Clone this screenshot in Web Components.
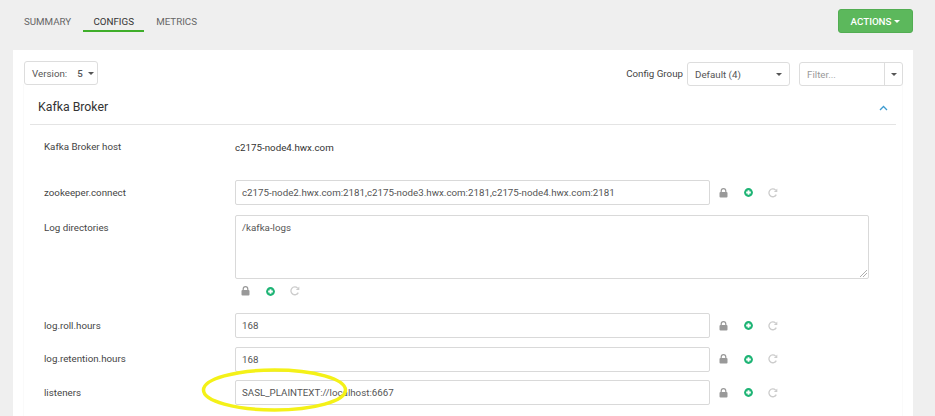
<!DOCTYPE html>
<html>
<head>
<meta charset="utf-8">
<style>
  html, body { margin: 0; padding: 0; height: 416px; overflow: hidden; background: #efefef; }
  body { font-family: Roboto, "Liberation Sans", sans-serif; color: #333; }
</style>
</head>
<body>
<svc-page>
  <svc-tabs slot="top">
    <svc-tab>SUMMARY</svc-tab>
    <svc-tab active>CONFIGS</svc-tab>
    <svc-tab>METRICS</svc-tab>
  </svc-tabs>
  <config-toolbar slot="toolbar"></config-toolbar>
  <config-section title="Kafka Broker" slot="section">
    <config-row label="Kafka Broker host" type="static" value="c2175-node4.hwx.com"></config-row>
    <config-row label="zookeeper.connect" value="c2175-node2.hwx.com:2181,c2175-node3.hwx.com:2181,c2175-node4.hwx.com:2181"></config-row>
    <config-row label="Log directories" type="area" value="/kafka-logs"></config-row>
    <config-row label="log.roll.hours" value="168"></config-row>
    <config-row label="log.retention.hours" value="168"></config-row>
    <config-row label="listeners" value="SASL_PLAINTEXT://localhost:6667"></config-row>
  </config-section>
</svc-page>

<script>
class SvcPage extends HTMLElement {
  constructor() {
    super();
    this.attachShadow({ mode: "open" }).innerHTML = `
    <style>
      :host { display: block; position: relative; height: 416px; overflow: hidden; }
      .top { display: flex; justify-content: space-between; height: 50px; padding: 9px 22px 0 12px; box-sizing: border-box; }
      .action {
        box-sizing: border-box; width: 75px; height: 24px; background: #5cb85c; border: 1px solid #52ad52; border-radius: 3px;
        color: #fff; font-size: 9.75px; font-weight: 500; display: flex; align-items: center; justify-content: center; gap: 3px;
      }
      .caret { width: 0; height: 0; border-left: 3px solid transparent; border-right: 3px solid transparent; border-top: 3px solid #fff; }
      .panel { background: #fff; margin: 0 22px 0 13px; padding: 11px 10px 0; height: 366px; box-sizing: border-box; }
      svg { position: absolute; left: 195px; top: 362px; }
    </style>
    <div class="top"><slot name="top"></slot><div class="action">ACTIONS<span class="caret"></span></div></div>
    <div class="panel"><slot name="toolbar"></slot><slot name="section"></slot></div>
    <svg width="160" height="56" viewBox="0 0 160 56"><ellipse cx="79.5" cy="28" rx="71" ry="20" fill="none" stroke="#f4f118" stroke-width="3.5"/></svg>`;
  }
}

class SvcTabs extends HTMLElement {
  constructor() {
    super();
    this.attachShadow({ mode: "open" }).innerHTML = `
    <style>:host { display: flex; height: 22px; }</style><slot></slot>`;
  }
}

class SvcTab extends HTMLElement {
  constructor() {
    super();
    this.attachShadow({ mode: "open" }).innerHTML = `
    <style>
      :host { display: block; box-sizing: border-box; height: 23px; padding: 7px 0 0; margin-left: 12px; font-size: 9.75px; color: #666; white-space: nowrap; }
      :host([active]) { width: 61px; text-align: center; color: #333; border-bottom: 2px solid #3fae2a; }
    </style><slot></slot>`;
  }
}

class ConfigToolbar extends HTMLElement {
  constructor() {
    super();
    this.attachShadow({ mode: "open" }).innerHTML = `
    <style>
      :host { display: flex; align-items: flex-start; height: 23px; font-size: 9.75px; color: #444; }
      .box { box-sizing: border-box; background: #fff; border: 1px solid #ddd; border-radius: 3px; display: flex; align-items: center; color: #555; }
      .version { width: 74px; height: 24px; margin-left: 1px; padding-left: 7px; }
      .version b { font-weight: 500; margin-left: 10px; margin-right: 5px; }
      .caret { width: 0; height: 0; border-left: 3px solid transparent; border-right: 3px solid transparent; border-top: 3px solid #555; }
      .spacer { flex: 1; }
      .lbl { margin-top: 7px; margin-right: 4px; }
      .group { width: 103px; height: 24px; margin-top: 1px; padding: 0 7px; justify-content: space-between; }
      .filter { width: 104px; height: 24px; margin-top: 1px; margin-left: 9px; }
      .filter span { flex: 1; padding-left: 7px; color: #999; }
      .filter i { box-sizing: border-box; width: 18px; height: 100%; border-left: 1px solid #ddd; display: flex; align-items: center; justify-content: center; }
    </style>
    <div class="box version">Version:<b>5</b><span class="caret"></span></div>
    <div class="spacer"></div>
    <div class="lbl">Config Group</div>
    <div class="box group">Default (4)<span class="caret"></span></div>
    <div class="box filter"><span>Filter...</span><i><span class="caret" style="flex:none;padding:0"></span></i></div>`;
  }
}

class ConfigSection extends HTMLElement {
  constructor() {
    super();
    this.attachShadow({ mode: "open" }).innerHTML = `
    <style>
      :host { display: block; box-sizing: border-box; border: 1px solid #fafafa; border-top: none; border-bottom: none; padding: 0 6px; height: 340px; }
      .head { display: flex; justify-content: space-between; align-items: center; height: 41px; padding: 0 8px 0 8px; border-bottom: 1px solid #e4e4e4; box-sizing: border-box; }
      h3 { margin: 0; font-size: 12.3px; font-weight: 400; color: #333; position: relative; top: 3px; }
      svg { display: block; position: relative; top: 4px; }
      .rows { padding: 0 0 0 14px; }
    </style>
    <div class="head"><h3></h3>
      <svg width="9" height="6" viewBox="0 0 9 6"><path d="M1 5 L4.5 1.5 L8 5" fill="none" stroke="#3d9bd0" stroke-width="1.3"/></svg>
    </div>
    <div class="rows"><slot></slot></div>`;
    this.shadowRoot.querySelector("h3").textContent = this.getAttribute("title");
  }
}

const rowIcons = `
  <svg width="9" height="10" viewBox="0 0 9 10"><path d="M2.2 4.5V3a2.3 2.3 0 0 1 4.6 0v1.5" fill="none" stroke="#999" stroke-width="1.2"/><rect x="0.5" y="4" width="8" height="5.5" rx="1" fill="#999"/></svg>
  <svg width="9" height="9" viewBox="0 0 10 10"><circle cx="5" cy="5" r="4.9" fill="#1eb475"/><path d="M5 2.4v5.2M2.4 5h5.2" stroke="#fff" stroke-width="2"/></svg>
  <svg width="10" height="10" viewBox="0 0 10 10"><path d="M8.3 6.6A3.9 3.9 0 1 1 7.6 2.1" fill="none" stroke="#ccc" stroke-width="1.3"/><path d="M9.3 0.6v3.4H5.9z" fill="#ccc"/></svg>`;

class ConfigRow extends HTMLElement {
  constructor() {
    super();
    const type = this.getAttribute("type") || "input";
    const label = this.getAttribute("label");
    const value = this.getAttribute("value");
    let body;
    if (type === "static") {
      body = `<div class="static">${value}</div>`;
    } else if (type === "area") {
      body = `<div class="col"><div class="field area">${value}<svg class="grip" width="7" height="7" viewBox="0 0 7 7"><path d="M0 7L7 0M3 7L7 3" stroke="#999" stroke-width=".8"/></svg></div><div class="icons under">${rowIcons}</div></div>`;
    } else {
      body = `<div class="field">${value}</div><div class="icons">${rowIcons}</div>`;
    }
    this.attachShadow({ mode: "open" }).innerHTML = `
    <style>
      :host { display: flex; font-size: 9.75px; color: #444; }
      :host([type="static"]) { height: 55px; padding-top: 16px; box-sizing: border-box; }
      :host(:not([type])) { height: 33.5px; }
      :host([type="area"]) { height: 98px; margin-top: 1.5px; }
      .lbl { width: 191px; flex: none; padding-top: 6.5px; }
      :host([type="static"]) .lbl { padding-top: 0; }
      :host([type="static"]) .static { padding-top: 1px; color: #333; }
      .field { position: relative; box-sizing: border-box; width: 475px; height: 25px; border: 1px solid #d9d9d9; border-radius: 2px; padding: 0 6px; display: flex; align-items: center; color: #555; white-space: nowrap; }
      .area { width: 634px; height: 64px; align-items: flex-start; padding-top: 6px; }
      .grip { position: absolute; right: 1px; bottom: 1px; }
      .icons { display: flex; align-items: center; gap: 15.5px; margin-left: 9px; height: 25px; }
      .under { margin-left: 6px; height: 24px; margin-top: 0; }
    </style>
    <div class="lbl">${label}</div>${body}`;
  }
}

customElements.define("svc-page", SvcPage);
customElements.define("svc-tabs", SvcTabs);
customElements.define("svc-tab", SvcTab);
customElements.define("config-toolbar", ConfigToolbar);
customElements.define("config-section", ConfigSection);
customElements.define("config-row", ConfigRow);
</script>
</body>
</html>
